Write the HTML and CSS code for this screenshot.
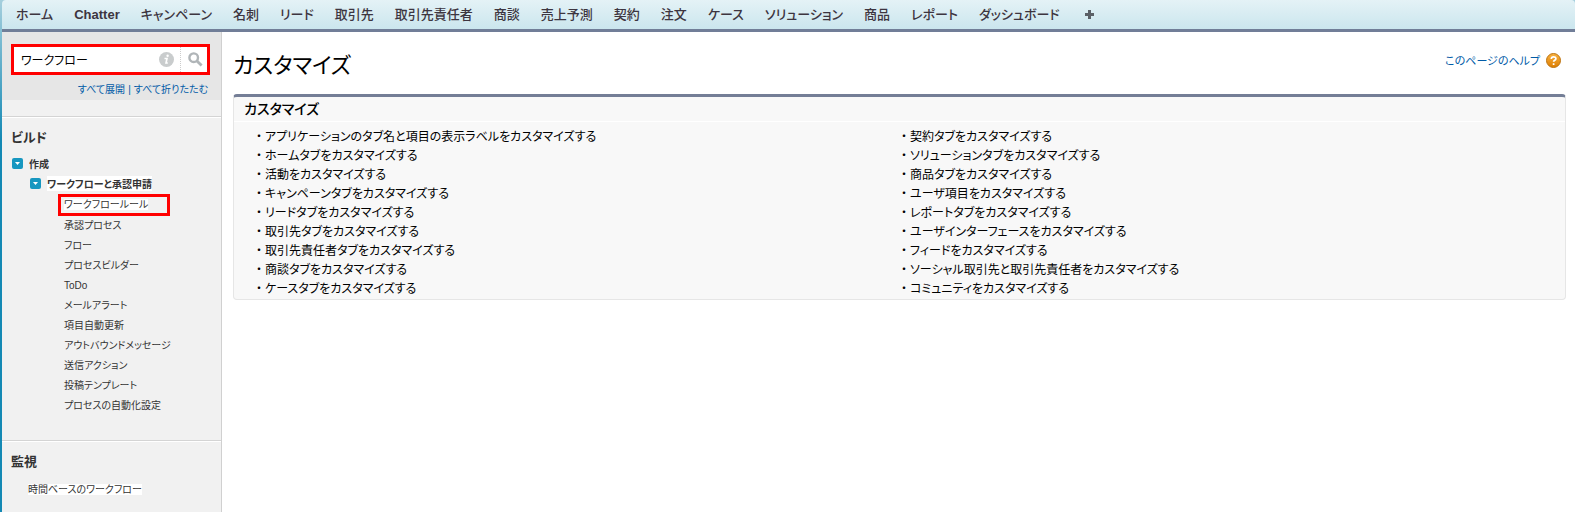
FILE: index.html
```
<!DOCTYPE html>
<html lang="ja">
<head>
    <meta charset="UTF-8">
    <meta name="viewport" content="width=device-width, initial-scale=1.0">
    <title>カスタマイズ</title>
    <link rel="stylesheet" href="styles.css">
</head>
<body>
  <nav class="tab_bar">
    <a href="#">ホーム</a>
    <a href="#" class="latin">Chatter</a>
    <a href="#">キャンペーン</a>
    <a href="#">名刺</a>
    <a href="#">リード</a>
    <a href="#">取引先</a>
    <a href="#">取引先責任者</a>
    <a href="#">商談</a>
    <a href="#">売上予測</a>
    <a href="#">契約</a>
    <a href="#">注文</a>
    <a href="#">ケース</a>
    <a href="#">ソリューション</a>
    <a href="#">商品</a>
    <a href="#">レポート</a>
    <a href="#">ダッシュボード</a>
    <a href="#" class="all_tabs" aria-label="すべてのタブ">
      <svg width="9" height="9" viewBox="0 0 9 9"><path d="M3 0h3v3h3v3H6v3H3V6H0V3h3z" fill="#5b6066"/></svg>
    </a>
  </nav>

  <div class="container">
    <aside class="sidebar">
      <div class="search_area">
        <form class="search_box">
          <input type="text" value="ワークフロー" aria-label="クイック検索">
          <svg class="info" width="15" height="15" viewBox="0 0 15 15">
            <circle cx="7.5" cy="7.5" r="7.5" fill="#c9cccd"/>
            <circle cx="8.6" cy="3.7" r="1.2" fill="#fff"/>
            <path d="M5.500 6.500h2.500L7 11h1.800" fill="none" stroke="#fff" stroke-width="1.600"/>
          </svg>
          <button type="button" aria-label="検索">
            <svg width="15" height="15" viewBox="0 0 15 15">
              <circle cx="5.7" cy="5.7" r="4.3" fill="none" stroke="#b0b5b8" stroke-width="2.4"/>
              <path d="M9 9l4.6 4.6" stroke="#b0b5b8" stroke-width="2.8"/>
            </svg>
          </button>
        </form>
        <div class="expand_links">
          <a href="#">すべて展開</a><span>|</span><a href="#">すべて折りたたむ</a>
        </div>
      </div>

      <section class="build">
        <h2>ビルド</h2>
        <div class="tree_node">
          <button type="button" class="toggle" aria-label="作成を折りたたむ"><svg width="11" height="11" viewBox="0 0 11 11"><path d="M3 4h5L5.5 7z" fill="#fff"/></svg></button>
          <a href="#">作成</a>
        </div>
        <div class="tree_node child">
          <button type="button" class="toggle" aria-label="ワークフローと承認申請を折りたたむ"><svg width="11" height="11" viewBox="0 0 11 11"><path d="M3 4h5L5.5 7z" fill="#fff"/></svg></button>
          <a href="#" class="hit">ワークフローと承認申請</a>
        </div>
        <ul class="tree_items">
          <li class="marked"><a href="#" class="hit">ワークフロールール</a></li>
          <li><a href="#">承認プロセス</a></li>
          <li><a href="#">フロー</a></li>
          <li><a href="#">プロセスビルダー</a></li>
          <li><a href="#">ToDo</a></li>
          <li><a href="#">メールアラート</a></li>
          <li><a href="#">項目自動更新</a></li>
          <li><a href="#">アウトバウンドメッセージ</a></li>
          <li><a href="#">送信アクション</a></li>
          <li><a href="#">投稿テンプレート</a></li>
          <li><a href="#">プロセスの自動化設定</a></li>
        </ul>
      </section>

      <section class="monitor">
        <h2>監視</h2>
        <p><a href="#" class="hit">時間ベースのワークフロー</a></p>
      </section>
    </aside>

    <main class="content">
      <div class="page_head">
        <h1>カスタマイズ</h1>
        <a href="#" class="help">このページのヘルプ
          <svg width="15" height="15" viewBox="0 0 15 15">
            <defs>
              <linearGradient id="orange" x1="0" y1="0" x2="0" y2="1">
                <stop offset="0" stop-color="#f9b342"/>
                <stop offset="1" stop-color="#dd7d00"/>
              </linearGradient>
            </defs>
            <circle cx="7.5" cy="7.5" r="7" fill="url(#orange)" stroke="#bd7412"/>
            <path d="M5.3 6c0-3 4.6-2.8 4.6-.3 0 1.5-2.3 1.5-2.3 3.1M7.6 10.2v1.7" fill="none" stroke="#fff" stroke-width="1.7"/>
          </svg>
        </a>
      </div>

      <section class="panel">
        <h2>カスタマイズ</h2>
        <div class="columns">
          <ul>
            <li><a href="#">アプリケーションのタブ名と項目の表示ラベルをカスタマイズする</a></li>
            <li><a href="#">ホームタブをカスタマイズする</a></li>
            <li><a href="#">活動をカスタマイズする</a></li>
            <li><a href="#">キャンペーンタブをカスタマイズする</a></li>
            <li><a href="#">リードタブをカスタマイズする</a></li>
            <li><a href="#">取引先タブをカスタマイズする</a></li>
            <li><a href="#">取引先責任者タブをカスタマイズする</a></li>
            <li><a href="#">商談タブをカスタマイズする</a></li>
            <li><a href="#">ケースタブをカスタマイズする</a></li>
          </ul>
          <ul>
            <li><a href="#">契約タブをカスタマイズする</a></li>
            <li><a href="#">ソリューションタブをカスタマイズする</a></li>
            <li><a href="#">商品タブをカスタマイズする</a></li>
            <li><a href="#">ユーザ項目をカスタマイズする</a></li>
            <li><a href="#">レポートタブをカスタマイズする</a></li>
            <li><a href="#">ユーザインターフェースをカスタマイズする</a></li>
            <li><a href="#">フィードをカスタマイズする</a></li>
            <li><a href="#">ソーシャル取引先と取引先責任者をカスタマイズする</a></li>
            <li><a href="#">コミュニティをカスタマイズする</a></li>
          </ul>
        </div>
      </section>
    </main>
  </div>
</body>
</html>
```
FILE: styles.css
```
*{
  margin: 0;
  padding: 0;
  box-sizing: border-box;
}
body{
  min-height: 100vh;
  display: flex;
  flex-direction: column;
  padding-left: 2px;
  background: linear-gradient(#a5cfdd, #1489b4 140px);
  color: #000;
  font-family: "Liberation Sans", "Noto Sans CJK JP", sans-serif;
  font-size: 12px;
  /* プロポーショナルかな */
  font-feature-settings: "palt";
}
a{
  color: inherit;
  text-decoration: none;
}
ul{
  list-style: none;
}
svg{
  display: block;
  flex: none;
}
button{
  border: 0;
  background: none;
  cursor: pointer;
}

/* タブバー */
.tab_bar{
  display: flex;
  gap: 21px;
  height: 32px;
  padding-left: 14px;
  border-bottom: 3px solid #717e98;
  border-radius: 4px 4px 0 0;
  background: linear-gradient(#e4f2f6, #cbe6ee);
  color: #3d3540;
  font-size: 13px;
  font-weight: 500;
  line-height: 30px;
  white-space: nowrap;
}
.tab_bar .latin{
  font-weight: bold;
}
.tab_bar .all_tabs{
  display: flex;
  align-items: center;
  padding-left: 4px;
}

.container{
  flex: 1;
  display: flex;
  background: #fff;
}

/* サイドバー */
.sidebar{
  flex: none;
  width: 220px;
  border-right: 1px solid #d0d0d0;
  background: #f1f1f1;
  color: #333;
}
.search_area{
  height: 68px;
  padding: 12px 11px 0 9px;
  background: #e6e6e6;
}
.search_box{
  display: flex;
  align-items: center;
  height: 31px;
  border: 3px solid #f00;
  background: #fff;
}
.search_box input{
  flex: 1;
  min-width: 0;
  padding-left: 7px;
  border: 0;
  outline: 0;
  font: inherit;
  font-feature-settings: inherit;
}
.search_box button{
  height: 100%;
  margin-left: 6px;
  padding: 0 4px 0 7px;
  border-left: 1px dotted #ccc;
}
.expand_links{
  display: flex;
  justify-content: flex-end;
  gap: 3px;
  padding: 7px 2px 0 0;
  color: #015ba7;
  font-size: 10px;
  line-height: 16px;
}
.build{
  min-height: 324px;
  margin-top: 17px;
  border-top: 1px solid #fff;
}
.monitor{
  border-top: 1px solid #fff;
}
.build, .monitor{
  padding: 10px 0 0 9px;
  box-shadow: 0 -1px #d4d4d4;
}
.sidebar h2{
  font-size: 13px;
  line-height: 20px;
}
.build h2{
  margin-bottom: 5px;
}
.tree_node{
  display: flex;
  align-items: center;
  gap: 6px;
  height: 20px;
  padding-left: 1px;
  font-size: 10px;
  font-weight: bold;
}
.child{
  padding-left: 19px;
}
.toggle{
  width: 11px;
  height: 11px;
  border-radius: 2px;
  background: #1797c0;
}
.hit{
  background: #fff;
}
.tree_items{
  padding: 1px 0 0 47px;
  font-size: 10px;
  line-height: 20px;
}
.tree_items li{
  padding-left: 6px;
}
.tree_items .marked{
  width: 112px;
  height: 22px;
  padding-left: 3px;
  border: 3px solid #f00;
  line-height: 16px;
}
.monitor p{
  padding: 8px 0 0 17px;
  font-size: 10px;
  line-height: 20px;
}

/* メイン */
.content{
  flex: 1;
  padding: 17px 9px 0 11px;
}
.page_head{
  display: flex;
  justify-content: space-between;
  height: 45px;
}
.page_head h1{
  font-size: 22px;
  font-weight: normal;
  line-height: 34px;
}
.help{
  display: flex;
  align-items: center;
  gap: 6px;
  height: 22px;
  padding-right: 5px;
  color: #015ba7;
  font-size: 11px;
}
.panel{
  border: 1px solid #e6e6e6;
  border-top: 3px solid #747e96;
  border-radius: 4px;
  background: #f8f8f8;
}
.panel h2{
  padding-left: 10px;
  border-bottom: 1px solid #fff;
  font-size: 14px;
  font-weight: 500;
  line-height: 24px;
}
.columns{
  display: grid;
  grid-template-columns: 1fr 1fr;
  padding: 6px 22px 0 19px;
  line-height: 19px;
}
.columns li::before{
  content: "・";
  font-feature-settings: normal;
}
```
